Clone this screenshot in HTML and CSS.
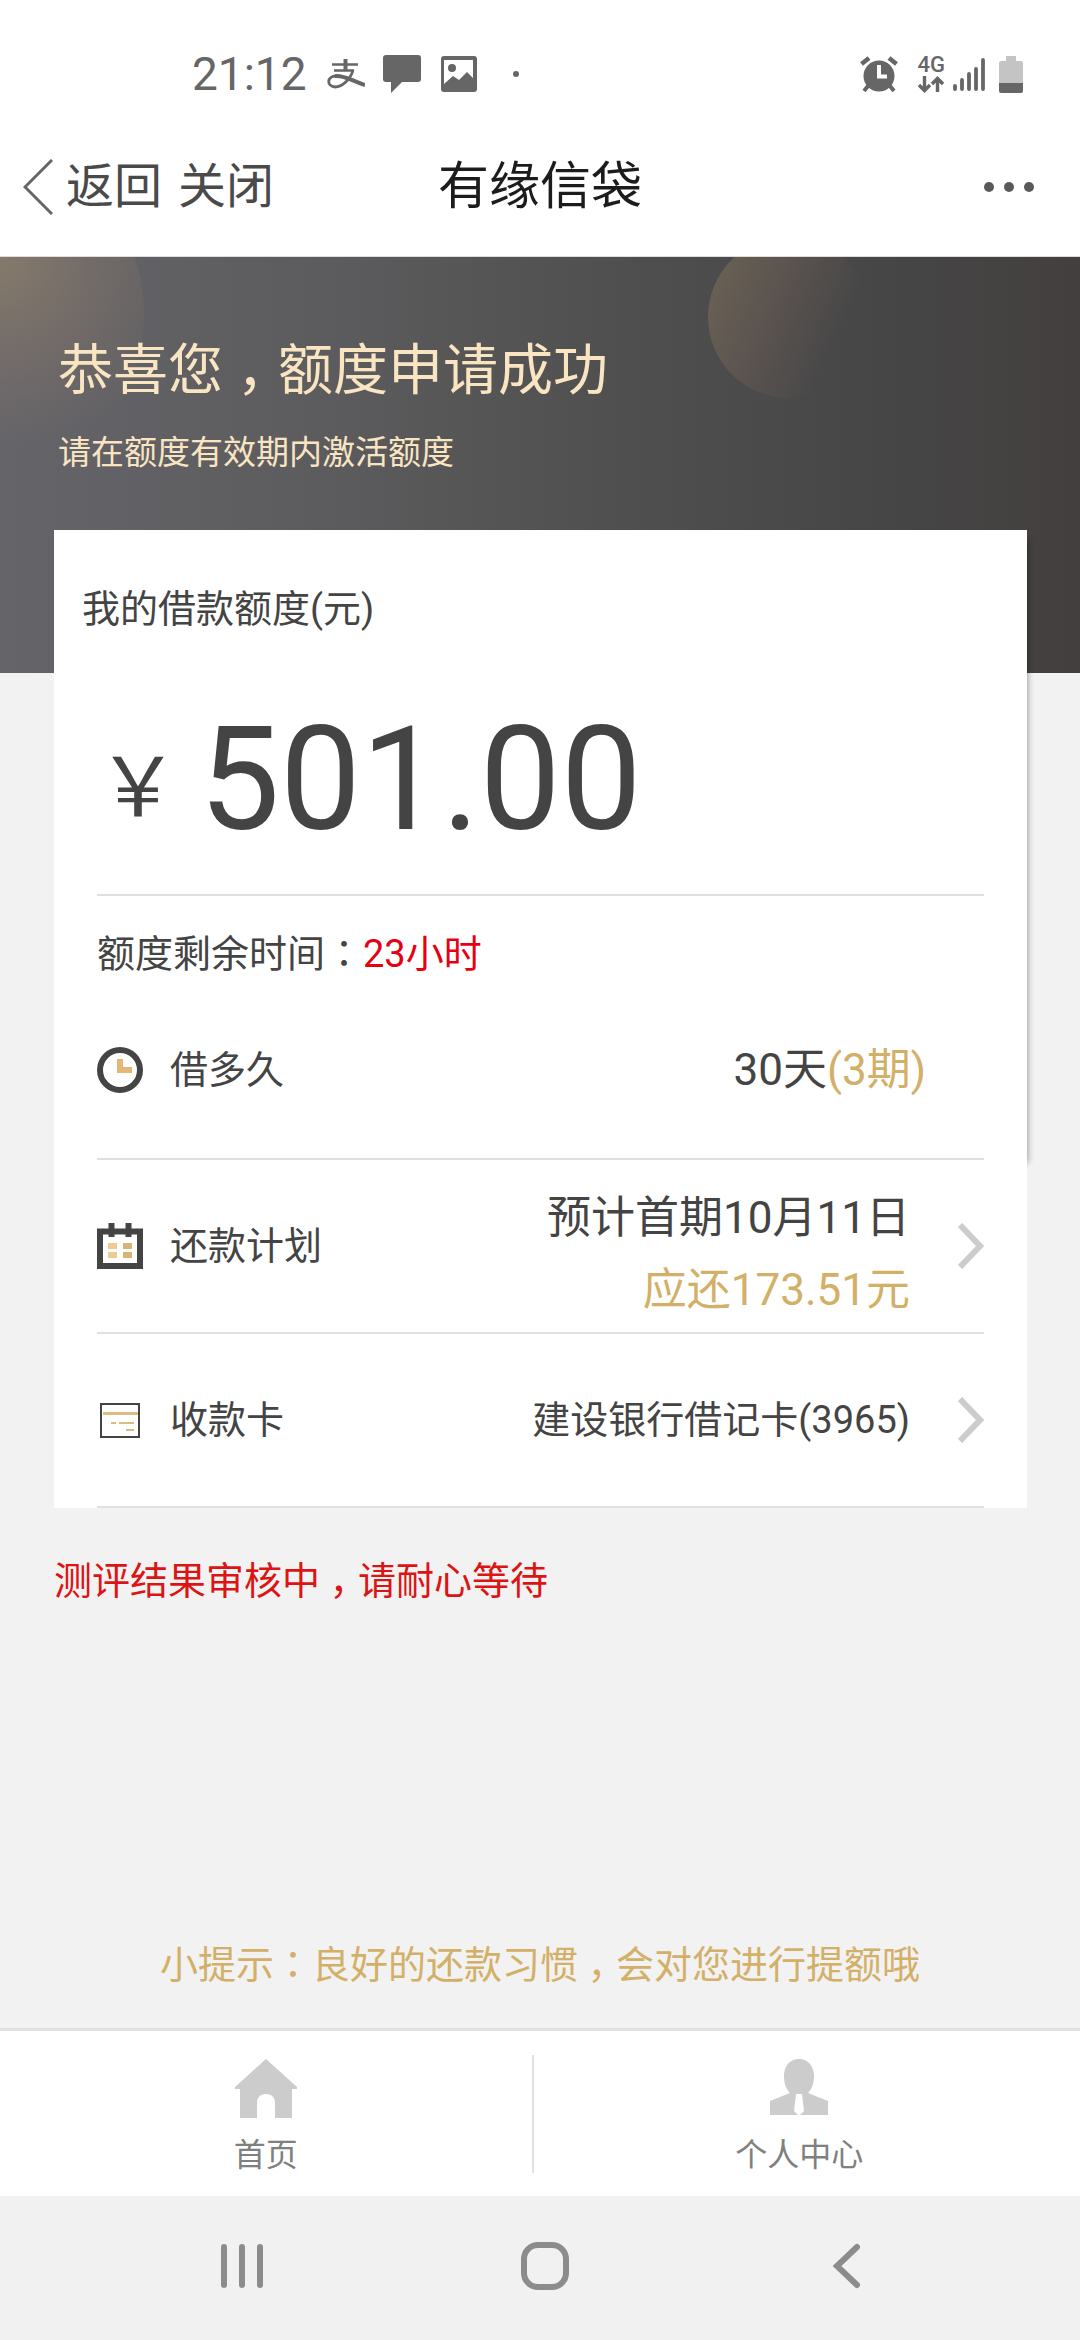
FILE: index.html
```html
<!DOCTYPE html>
<html lang="zh-CN">
<head>
<meta charset="utf-8">
<meta name="viewport" content="width=device-width, initial-scale=1">
<title>有缘信袋</title>
<link rel="stylesheet" href="styles.css">
</head>
<body>
<div class="page">
  <div class="status">
    <div class="status-side">
      <span class="time">21:12</span>
      <svg class="ic-pay" width="38" height="30" viewBox="0 0 38 30" fill="none" stroke="#666" aria-hidden="true">
        <path d="M5 5.500H31M7 11.500H27" stroke-width="2.600"/>
        <path d="M18.500 0V11" stroke-width="4"/>
        <path d="M26 11C24 19 16 28 8 28C-1 27 0 17 9 17" stroke-width="2.800"/>
        <path d="M8 17C18 16 25 22 38 26" stroke-width="4"/>
      </svg>
      <svg class="ic-chat" width="38" height="38" viewBox="0 0 38 38" fill="#666" aria-hidden="true">
        <path d="M3 0H35Q38 0 38 3V24Q38 27 35 27H19L8 38V27H3Q0 27 0 24V3Q0 0 3 0Z"/>
      </svg>
      <svg class="ic-pic" width="36" height="36" viewBox="0 0 36 36" aria-hidden="true">
        <rect width="36" height="36" rx="3" fill="#666"/>
        <path d="M3 4H32V22L26 16L18 24L12 20L3 28Z" fill="#fff"/>
        <circle cx="11" cy="12" r="4" fill="#666"/>
      </svg>
      <svg width="6" height="6" viewBox="0 0 6 6" aria-hidden="true"><circle cx="3" cy="3" r="3" fill="#666"/></svg>
    </div>
    <div class="status-side">
      <svg width="38" height="36" viewBox="0 0 38 36" fill="none" stroke="#666" aria-hidden="true">
        <circle cx="19" cy="20" r="15.500" fill="#666" stroke="none"/>
        <path d="M1.500 8L9 2M36.500 8L29 2" stroke-width="4.500"/>
        <path d="M8 30L4 35M30 30L34 35" stroke-width="4"/>
        <path d="M19 9V20.500H27" stroke="#fff" stroke-width="4"/>
      </svg>
      <div class="net">
        <span>4G</span>
        <svg width="26" height="17" viewBox="0 0 26 17" fill="none" stroke="#666" stroke-width="3.400" aria-hidden="true">
          <path d="M6.500 0V14M1 9L6.500 14.500L12 9M19.500 16V3M14 8L19.500 2.500L25 8"/>
        </svg>
      </div>
      <svg class="ic-signal" width="32" height="34" viewBox="0 0 32 34" stroke="#666" stroke-width="3.800" stroke-linecap="round" aria-hidden="true">
        <path d="M2 29V32M9 23V32M16 17V32M23 12V32M30 3V32"/>
      </svg>
      <svg class="ic-battery" width="24" height="37" viewBox="0 0 24 37" aria-hidden="true">
        <path d="M7 0H17V5H22Q24 5 24 7V28H0V7Q0 5 2 5H7Z" fill="#c4c4c4"/>
        <path d="M0 27H24V35Q24 37 22 37H2Q0 37 0 35Z" fill="#666"/>
      </svg>
    </div>
  </div>

  <header class="topbar">
    <div class="topbar-left">
      <button class="back" type="button">
        <svg width="30" height="56" viewBox="0 0 30 56" fill="none" stroke="#666" stroke-width="3" aria-hidden="true"><path d="M29 1L2 28L29 55"/></svg>
        返回
      </button>
      <button type="button">关闭</button>
    </div>
    <h1>有缘信袋</h1>
    <button class="more" type="button" aria-label="更多">
      <svg width="50" height="12" viewBox="0 0 50 12" fill="#595959" aria-hidden="true"><circle cx="5" cy="6" r="5"/><circle cx="25" cy="6" r="5"/><circle cx="45" cy="6" r="5"/></svg>
    </button>
  </header>

  <main>
    <section class="hero">
      <h2>恭喜您<span class="comma">，</span>额度申请成功</h2>
      <p>请在额度有效期内激活额度</p>
    </section>

    <section class="card card-top">
      <h3>我的借款额度(元)</h3>
      <p class="amount"><span class="yen">￥</span><span>501.00</span></p>
      <p class="remain">额度剩余时间<span class="colon">：</span><span class="red">23小时</span></p>
      <div class="row row-term">
        <svg width="46" height="46" viewBox="0 0 46 46" fill="none" aria-hidden="true">
          <circle cx="23" cy="23" r="20" stroke="#444" stroke-width="6"/>
          <path d="M23 12V23H35" stroke="#e3b877" stroke-width="6"/>
        </svg>
        <span class="label">借多久</span>
        <span class="value big">30天<span class="gold">(3期)</span></span>
      </div>
    </section>
    <section class="card card-bottom">
      <button class="row" type="button">
        <svg width="46" height="46" viewBox="0 0 46 46" fill="none" aria-hidden="true">
          <path d="M3 8.500H43V43H3Z" stroke="#444" stroke-width="6"/>
          <path d="M14.500 0V14M31.500 0V14" stroke="#444" stroke-width="6"/>
          <path d="M11 20H20V26H11ZM11 29H20V35H11Z" fill="#edcb95"/>
          <path d="M26 20H35V26H26ZM26 29H35V35H26Z" fill="#d9b476"/>
        </svg>
        <span class="label">还款计划</span>
        <span class="value big plan">预计首期10月11日<br><span class="gold">应还173.51元</span></span>
        <svg class="chev" width="26" height="46" viewBox="0 0 26 46" fill="none" stroke="#ccc" stroke-width="6" aria-hidden="true"><path d="M2 2L22 23L2 44"/></svg>
      </button>
      <button class="row" type="button">
        <svg width="46" height="46" viewBox="0 0 46 46" fill="none" aria-hidden="true">
          <path d="M4 7H42V40H4Z" stroke="#444" stroke-width="2"/>
          <path d="M6 16.500H41" stroke="#dcbc82" stroke-width="3"/>
          <path d="M14 26H19M22 26H37M29 33H37" stroke="#dcbc82" stroke-width="2"/>
        </svg>
        <span class="label">收款卡</span>
        <span class="value">建设银行借记卡(3965)</span>
        <svg class="chev" width="26" height="46" viewBox="0 0 26 46" fill="none" stroke="#ccc" stroke-width="6" aria-hidden="true"><path d="M2 2L22 23L2 44"/></svg>
      </button>
    </section>

    <p class="notice">测评结果审核中<span class="comma">，</span>请耐心等待</p>
    <p class="tip">小提示<span class="colon">：</span>良好的还款习惯<span class="comma">，</span>会对您进行提额哦</p>
  </main>

  <nav class="tabs">
    <a href="#home">
      <svg width="62" height="60" viewBox="0 0 62 60" fill="#ccc" aria-hidden="true"><path d="M31 0L62 28V30H57V59H40V43Q39 35 31 35Q23 35 22 43V59H5V30H0V28Z"/></svg>
      首页
    </a>
    <a href="#me">
      <svg width="58" height="60" viewBox="0 0 58 60" aria-hidden="true">
        <path d="M29 0C38 0 44 7 44 17C44 26 41 31 38 34L58 42V56H0V42L20 34C17 31 14 26 14 17C14 7 20 0 29 0Z" fill="#ccc"/>
        <path d="M26 35H32L34 52L29 57L24 52Z" fill="#fff"/>
      </svg>
      个人中心
    </a>
  </nav>

  <div class="sysnav">
    <button type="button" aria-label="最近任务"><svg width="48" height="48" viewBox="0 0 48 48" stroke="#8c8c8c" stroke-width="6" stroke-linecap="round" aria-hidden="true"><path d="M6 5V43M24 5V43M42 5V43"/></svg></button>
    <button type="button" aria-label="主页"><svg width="48" height="48" viewBox="0 0 48 48" fill="none" stroke="#8c8c8c" stroke-width="6" aria-hidden="true"><rect x="3" y="3" width="42" height="42" rx="14"/></svg></button>
    <button type="button" aria-label="返回"><svg width="48" height="48" viewBox="0 0 48 48" fill="none" stroke="#8c8c8c" stroke-width="6" stroke-linecap="round" aria-hidden="true"><path d="M34 5L14 24L34 43"/></svg></button>
  </div>
</div>
</body>
</html>
```
FILE: styles.css
```css
* { box-sizing: border-box; }

body {
  margin: 0;
  background: #f2f2f2;
  color: #444;
  font-family: Roboto, "Noto Sans CJK SC", sans-serif;
  font-size: 38px;
  line-height: 56px;
}

h1, h2, h3, p { margin: 0; font-weight: 400; }

button {
  margin: 0;
  padding: 0;
  border: 0;
  background: none;
  color: inherit;
  font: inherit;
}

a { color: inherit; text-decoration: none; }
svg { display: block; flex: none; }

.page { display: flex; flex-direction: column; min-height: 100vh; }

/* Full-width punctuation sits in the middle of its cell */
.comma, .colon {
  display: inline-block;
  width: 1em;
  text-align: center;
  font-feature-settings: "halt";
}
.colon { font-family: "Noto Sans CJK JP", sans-serif; line-height: 1; font-feature-settings: normal; }

/* System status bar */
.status {
  display: flex;
  justify-content: space-between;
  padding: 46px 57px 0 192px;
  background: #fff;
  color: #666;
}
.status-side { display: flex; align-items: center; }
.time { font-size: 46px; }
.ic-pay { margin-left: 20px; }
.ic-chat { margin-left: 18px; }
.ic-pic { margin: 0 36px 0 20px; }
.net {
  display: flex;
  flex-direction: column;
  align-items: center;
  gap: 3px;
  margin-left: 20px;
  font-size: 22px;
  font-weight: 500;
  line-height: 17px;
}
.ic-signal { margin: 0 14px 0 8px; }

/* Title bar */
.topbar {
  display: grid;
  grid-template-columns: 1fr auto 1fr;
  align-items: center;
  padding: 50px 23px 34px;
  border-bottom: 1px solid #ddd;
  background: #fff;
}
.topbar-left { display: flex; gap: 16px; color: #4a4a4a; font-size: 48px; line-height: 70px; }
.back { display: flex; align-items: center; gap: 13px; }
.topbar h1 { color: #1c1c1c; font-size: 51px; line-height: 70px; }
.more { justify-self: end; margin-right: 23px; }

main { flex: 1; display: flex; flex-direction: column; }

/* Dark banner */
.hero {
  height: 416px;
  padding: 75px 58px;
  color: #fae5c3;
  background: linear-gradient(90deg, #656469 0%, #5c5c5e 30%, #4f4f4f 58%, #464646 82%, #443f3f 100%);
  position: relative;
  overflow: hidden;
}
.hero::before, .hero::after { content: ""; position: absolute; border-radius: 50%; }
.hero::before {
  left: -210px;
  top: -120px;
  width: 354px;
  height: 354px;
  background: radial-gradient(circle at 210px 120px, rgba(165, 145, 108, .5), rgba(150, 128, 108, .32) 90px, transparent 190px);
}
.hero::after {
  left: 708px;
  top: -21px;
  width: 162px;
  height: 162px;
  background: linear-gradient(115deg, rgba(150, 130, 96, .4) 8%, rgba(140, 108, 96, .22) 45%, transparent 75%);
}
.hero h2, .hero p { position: relative; z-index: 1; }
.hero h2 { font-size: 55px; line-height: 76px; }
.hero p { margin-top: 18px; font-size: 33px; line-height: 54px; }

/* Loan card */
.card { margin: 0 53px 0 54px; background: #fff; }
.card-top {
  position: relative;
  z-index: 1;
  margin-top: -143px;
  padding: 51px 43px 0;
  box-shadow: 4px 6px 6px -3px rgba(0, 0, 0, .35);
}
.card-bottom { position: relative; z-index: 2; padding: 0 43px; }
.card h3 { margin-left: -15px; font-size: 38px; }
.amount {
  display: flex;
  align-items: center;
  padding: 77px 0 48px;
  border-bottom: 2px solid #e0e0e0;
  font-size: 144px;
  line-height: 132px;
}
.yen { margin-right: 20px; padding-top: 16px; font-size: 82px; line-height: 116px; }
.remain { padding-top: 30px; }
.red { color: #e60012; }
.gold { color: #d2b068; }

.row {
  display: flex;
  align-items: center;
  width: 100%;
  height: 174px;
  border-bottom: 2px solid #e0e0e0;
  text-align: left;
}
.row-term { height: 178px; padding-right: 58px; }
.label { margin-left: 27px; }
.value { margin-left: auto; text-align: right; }
.value.big { font-size: 44px; line-height: 72px; }
.value.plan { padding-top: 16px; }
.chev { margin-left: 48px; }

.notice { margin: 45px 54px 0; color: #dc1414; }
.tip { margin: auto 0 35px; padding: 0 20px; color: #d2b068; text-align: center; }

/* Bottom tabs */
.tabs {
  display: flex;
  padding: 24px 15px 23px 0;
  border-top: 3px solid #e0e0e0;
  background: #fff;
  color: #808080;
  font-size: 32px;
  line-height: 48px;
}
.tabs a {
  flex: 1;
  display: flex;
  flex-direction: column;
  align-items: center;
  gap: 12px;
  height: 118px;
  padding-top: 4px;
}
.tabs a + a { border-left: 2px solid #e0e0e0; }

/* System navigation */
.sysnav {
  display: flex;
  justify-content: space-between;
  padding: 46px 209px 50px 218px;
  background: #f1f1f1;
}
```
